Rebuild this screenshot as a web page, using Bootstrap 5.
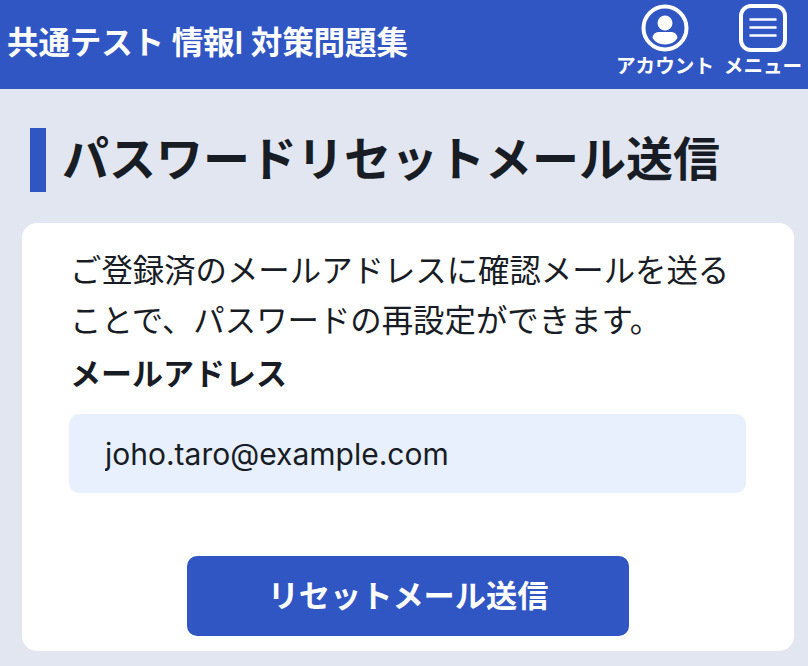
<!DOCTYPE html>
<html lang="ja">
<head>
<meta charset="utf-8">
<title>パスワードリセットメール送信</title>
<link rel="stylesheet" href="https://cdn.jsdelivr.net/npm/bootstrap@5.3.0/dist/css/bootstrap.min.css">
<style>
html,body{height:100%}
body{background:#e2e6f0;color:#181c24;font-family:Inter,"Noto Sans CJK JP",sans-serif;overflow:hidden}
.topbar{background:#3056c4;height:89px;color:#fff}
.site-title{font-size:31.6px;font-weight:600;line-height:1;margin:0 0 4px 7px;letter-spacing:-.2px}
.nav-cell{font-size:19.6px;font-weight:600;line-height:1;color:#fff}
.nav-cell svg{display:block;width:50px;height:50px;margin-bottom:4px}
.nav-group{padding-top:3px}
.acct{width:98px;margin-right:9px}
.menu{width:80px;margin-right:5px}
.page-head{margin:39px 0 0 30px;height:64px;border-left:16px solid #3056c4;padding-left:16px;font-size:47px;font-weight:700;line-height:62px}
.sheet{background:#fff;margin:31px 14px 0 22px;height:428px;border-radius:15px;padding:21px 48px 0 47px}
.intro{font-size:31.4px;line-height:50px;margin:2px 0 0 1px}
.lbl{font-size:31px;font-weight:700;line-height:40px;margin:8px 0 0 1px;display:block}
.mail{background:#e8f0fe;border:0;border-radius:10px;height:79px;width:100%;font-size:30px;padding:0 35px 0 36px;margin-top:20px;color:#181c24}
.send{background:#3056c4;color:#fff;border:0;border-radius:10px;width:442px;height:80px;font-size:31.2px;font-weight:700;display:block;margin:63px auto 0 118px}
.send:hover{background:#3056c4;color:#fff}
</style>
</head>
<body>
<header class="topbar d-flex align-items-center justify-content-between">
  <div class="site-title">共通テスト 情報I 対策問題集</div>
  <div class="nav-group d-flex align-self-start">
    <div class="nav-cell acct d-flex flex-column align-items-center">
      <svg viewBox="0 0 50 50"><circle cx="25" cy="25" r="21.5" fill="none" stroke="#fff" stroke-width="4"/><circle cx="25" cy="20" r="7.500" fill="#fff"/><path d="M12.500 35a6 6 0 0 1 6-6h13a6 6 0 0 1 6 6q-4 6.500-12.500 6.500t-12.500-6.500z" fill="#fff"/></svg>
      <span>アカウント</span>
    </div>
    <div class="nav-cell menu d-flex flex-column align-items-center">
      <svg viewBox="0 0 50 50"><rect x="3" y="3" width="44" height="44" rx="10" fill="none" stroke="#fff" stroke-width="4"/><path d="M11.500 16.500h27M11.500 24.500h27M11.500 32.500h27" stroke="#fff" stroke-width="2.5"/></svg>
      <span>メニュー</span>
    </div>
  </div>
</header>
<main>
  <h1 class="page-head mb-0">パスワードリセットメール送信</h1>
  <section class="sheet">
    <p class="intro mb-0">ご登録済のメールアドレスに確認メールを送ることで、パスワードの再設定ができます。</p>
    <label class="lbl" for="mail">メールアドレス</label>
    <input class="mail form-control-plaintext" id="mail" type="email" value="joho.taro@example.com">
    <button class="btn send" type="button">リセットメール送信</button>
  </section>
</main>
<script src="https://cdn.jsdelivr.net/npm/bootstrap@5.3.0/dist/js/bootstrap.bundle.min.js"></script>
</body>
</html>
